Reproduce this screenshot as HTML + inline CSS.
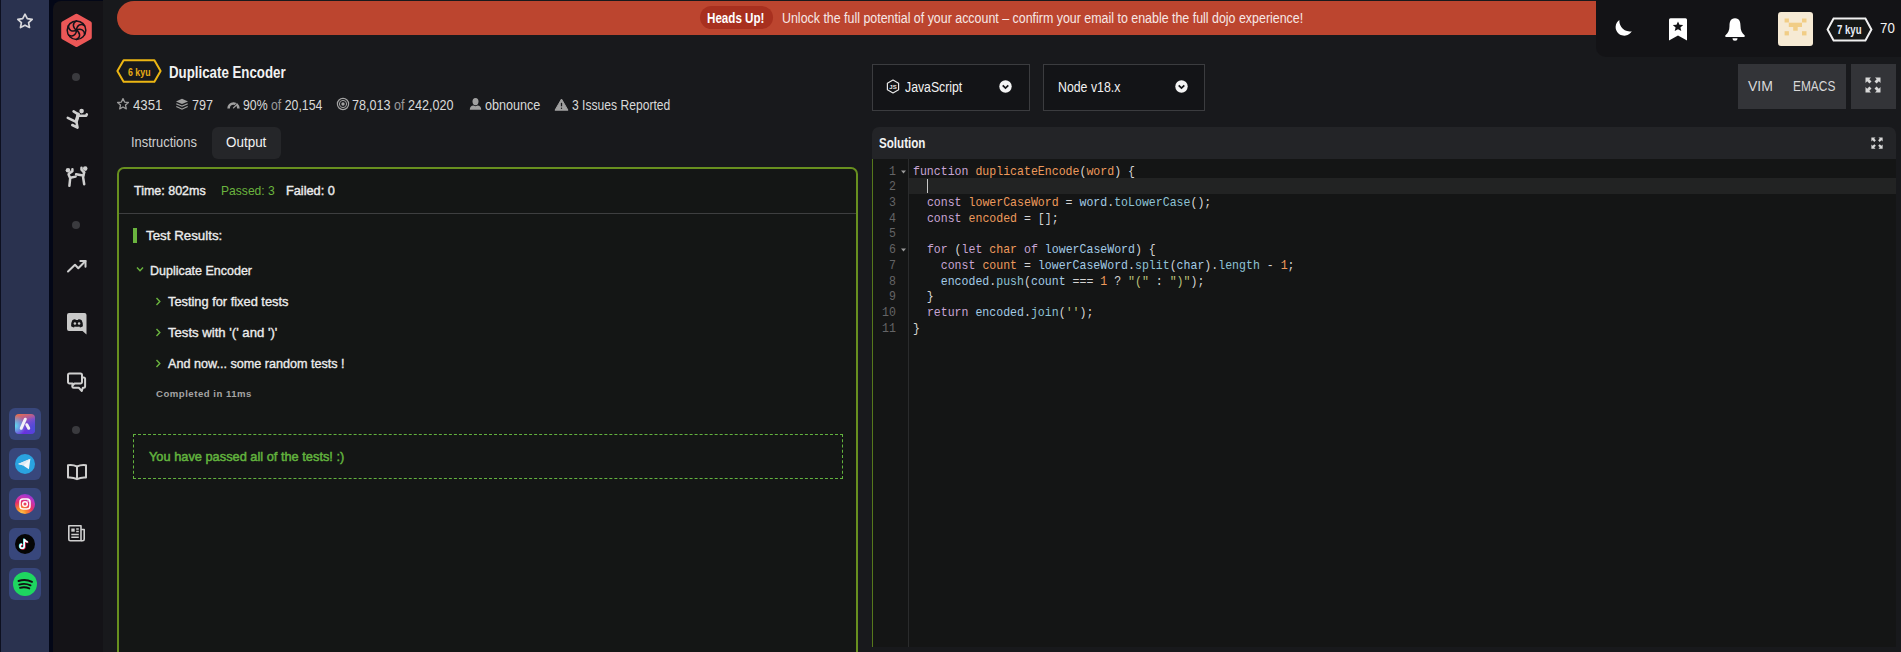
<!DOCTYPE html>
<html><head><meta charset="utf-8">
<style>
*{margin:0;padding:0;box-sizing:border-box}
html,body{width:1901px;height:652px;overflow:hidden;background:#18191c;font-family:"Liberation Sans",sans-serif;color:#e8e8e8}
.a{position:absolute}
.t{position:absolute;white-space:nowrap;transform-origin:0 0;line-height:1}
#strip{left:0;top:0;width:49px;height:652px;background:#2a324f;border-left:1px solid #0d1020}
#gap{left:49px;top:0;width:54px;height:652px;background:#030717}
#nav{left:53px;top:1px;width:50px;height:651px;background:#141317;border-top-left-radius:8px}
#banner{left:117px;top:1px;width:1500px;height:34px;background:#bc452f;border-radius:17px}
#tr{left:1596px;top:0;width:305px;height:57px;background:#131316;border-bottom-left-radius:10px}
.dot{position:absolute;left:72px;width:8px;height:8px;border-radius:50%;background:#3a3a3e}
.appbox{position:absolute;left:9px;width:32px;height:32px;border-radius:6px;background:#38477c}
.dd{position:absolute;top:64px;height:47px;border:1px solid #3b3c3f;background:#131417}
.code{position:absolute;left:913px;font-family:"Liberation Mono",monospace;font-size:13px;white-space:pre;line-height:15.73px;color:#d4d4d4;transform:scaleX(0.889);transform-origin:0 0}
.ln{position:absolute;font-family:"Liberation Mono",monospace;font-size:13px;line-height:15.73px;color:#646466;text-align:right;width:24px;left:872px;transform:scaleX(0.889);transform-origin:100% 0}
.k{color:#c7a4d4}.d{color:#ee9a5c}.v{color:#a3cbe6}.p{color:#8ec3d6}.n{color:#ee9a5c}.s{color:#bcc27a}
</style></head><body>
<div class="a" id="strip"></div>
<div class="a" id="gap"></div>
<div class="a" id="nav"></div>
<div class="a" id="banner"></div>
<div class="a" id="tr"></div>

<!-- ===== left strip ===== -->
<svg class="a" style="left:15px;top:12px" width="20" height="18" viewBox="0 0 20 18"><path d="M10 2.2 L12.3 6.6 L17.2 7.3 L13.6 10.7 L14.5 15.5 L10 13.2 L5.5 15.5 L6.4 10.7 L2.8 7.3 L7.7 6.6 Z" fill="none" stroke="#d8d8dc" stroke-width="1.7" stroke-linejoin="round"/></svg>

<div class="appbox" style="top:408px"></div>
<div class="appbox" style="top:448px"></div>
<div class="appbox" style="top:488px"></div>
<div class="appbox" style="top:528px"></div>
<div class="appbox" style="top:568px"></div>

<!-- ===== nav ===== -->
<svg class="a" style="left:60px;top:13px" width="33" height="35" viewBox="0 0 33 35"><path d="M16.5 2.8 L29.8 10.3 L29.8 24.6 L16.5 32.1 L3.2 24.6 L3.2 10.3 Z" fill="#ec5757" stroke="#ec5757" stroke-width="4" stroke-linejoin="round"/><g transform="translate(16.5 17.2)" fill="none" stroke="#15131a" stroke-width="1.5" stroke-linecap="round"><circle r="9.3"/><path d="M0.5 0.5 C -4 -2.5, -4.5 -7, 0 -9.3" transform="rotate(0)"/><path d="M0.5 0.5 C -4 -2.5, -4.5 -7, 0 -9.3" transform="rotate(60)"/><path d="M0.5 0.5 C -4 -2.5, -4.5 -7, 0 -9.3" transform="rotate(120)"/><path d="M0.5 0.5 C -4 -2.5, -4.5 -7, 0 -9.3" transform="rotate(180)"/><path d="M0.5 0.5 C -4 -2.5, -4.5 -7, 0 -9.3" transform="rotate(240)"/><path d="M0.5 0.5 C -4 -2.5, -4.5 -7, 0 -9.3" transform="rotate(300)"/></g></svg>
<div class="dot" style="top:73px"></div>
<div class="dot" style="top:221px"></div>
<div class="dot" style="top:426px"></div>

<!-- ===== banner ===== -->
<div class="a" style="left:700px;top:6px;width:73px;height:23px;border-radius:12px;background:#a8301f"></div>
<div class="t" style="left:707px;top:11px;font-size:14px;font-weight:bold;color:#fff;transform:scaleX(0.83)">Heads Up!</div>
<div class="t" style="left:782px;top:10.5px;font-size:14px;color:#f7e8e6;transform:scaleX(0.887)">Unlock the full potential of your account – confirm your email to enable the full dojo experience!</div>

<!-- ===== title ===== -->
<svg class="a" style="left:116px;top:59px" width="47" height="25" viewBox="0 0 47 25"><path d="M1.4 12 L7.6 1.3 L38.4 1.3 L44.6 12 L38.4 22.7 L7.6 22.7 Z" fill="none" stroke="#ecb613" stroke-width="2" stroke-linejoin="round"/></svg>
<div class="t" style="left:128px;top:66.5px;font-size:11px;font-weight:bold;color:#e9ad14;transform:scaleX(0.8)">6 kyu</div>
<div class="t" style="left:169px;top:65px;font-size:16px;font-weight:bold;color:#f2f2f2;transform:scaleX(0.83)">Duplicate Encoder</div>

<!-- ===== stats ===== -->
<div class="t" style="left:133px;top:98px;font-size:14px;color:#d9d9d9;transform:scaleX(0.94)">4351</div>
<div class="t" style="left:192px;top:98px;font-size:14px;color:#d9d9d9;transform:scaleX(0.9)">797</div>
<div class="t" style="left:243px;top:98px;font-size:14px;color:#d9d9d9;transform:scaleX(0.878)">90% <span style="color:#9a9a9a">of</span> 20,154</div>
<div class="t" style="left:352px;top:98px;font-size:14px;color:#d9d9d9;transform:scaleX(0.9)">78,013 <span style="color:#9a9a9a">of</span> 242,020</div>
<div class="t" style="left:485px;top:98px;font-size:14px;color:#d9d9d9;transform:scaleX(0.9)">obnounce</div>
<div class="t" style="left:572px;top:98px;font-size:14px;color:#d9d9d9;transform:scaleX(0.865)">3 Issues Reported</div>

<!-- ===== tabs ===== -->
<div class="a" style="left:212px;top:127px;width:69px;height:32px;border-radius:6px;background:#252629"></div>
<div class="t" style="left:131px;top:135px;font-size:14px;color:#cfcfcf;transform:scaleX(0.92)">Instructions</div>
<div class="t" style="left:226px;top:135px;font-size:14px;color:#f2f2f2;transform:scaleX(0.96)">Output</div>

<!-- ===== output panel ===== -->
<div class="a" style="left:117px;top:167px;width:741px;height:520px;border:2px solid #68901f;border-radius:7px;background:#141615"></div>
<div class="a" style="left:119px;top:213px;width:737px;height:1px;background:#3e3f40"></div>
<div class="t" style="left:134px;top:184px;font-size:13px;color:#ececec;-webkit-text-stroke:0.4px #ececec;transform:scaleX(0.96)">Time: 802ms</div>
<div class="t" style="left:221px;top:184px;font-size:13px;color:#6ab43e;transform:scaleX(0.93)">Passed: 3</div>
<div class="t" style="left:286px;top:184px;font-size:13px;color:#ececec;-webkit-text-stroke:0.4px #ececec;transform:scaleX(0.98)">Failed: 0</div>
<div class="a" style="left:133px;top:228px;width:4px;height:15px;background:#6ab43e"></div>
<div class="t" style="left:146px;top:229px;font-size:13px;color:#ececec;-webkit-text-stroke:0.35px #ececec;transform:scaleX(1.025)">Test Results:</div>
<div class="t" style="left:150px;top:263.5px;font-size:13px;color:#ececec;-webkit-text-stroke:0.35px #ececec;transform:scaleX(0.96)">Duplicate Encoder</div>
<div class="t" style="left:167.5px;top:295px;font-size:13px;color:#ececec;-webkit-text-stroke:0.35px #ececec;transform:scaleX(0.986)">Testing for fixed tests</div>
<div class="t" style="left:167.5px;top:326px;font-size:13px;color:#ececec;-webkit-text-stroke:0.35px #ececec;transform:scaleX(1.01)">Tests with '(' and ')'</div>
<div class="t" style="left:167.5px;top:357px;font-size:13px;color:#ececec;-webkit-text-stroke:0.35px #ececec;transform:scaleX(0.97)">And now... some random tests !</div>
<div class="t" style="left:156px;top:389px;font-size:9.6px;font-weight:bold;color:#a4a4a4;letter-spacing:0.5px">Completed in 11ms</div>
<div class="a" style="left:133px;top:434px;width:710px;height:45px;border:1px dashed #62b33e"></div>
<div class="t" style="left:149px;top:450px;font-size:13px;color:#62b33e;-webkit-text-stroke:0.5px #62b33e;transform:scaleX(0.985)">You have passed all of the tests! :)</div>

<!-- ===== editor toolbar ===== -->
<div class="dd" style="left:872px;width:158px"></div>
<div class="dd" style="left:1043px;width:162px"></div>
<div class="t" style="left:905px;top:80px;font-size:14px;color:#f2f2f2;transform:scaleX(0.876)">JavaScript</div>
<div class="t" style="left:1058px;top:80px;font-size:14px;color:#f2f2f2;transform:scaleX(0.88)">Node v18.x</div>
<div class="a" style="left:1738px;top:64px;width:108px;height:45px;background:#333438"></div>
<div class="a" style="left:1851px;top:64px;width:45px;height:45px;background:#333438"></div>
<div class="t" style="left:1748px;top:79px;font-size:14px;color:#d8d8d8">VIM</div>
<div class="t" style="left:1793px;top:79px;font-size:14px;color:#d8d8d8;transform:scaleX(0.85)">EMACS</div>

<!-- ===== editor ===== -->
<div class="a" style="left:872px;top:127px;width:1024px;height:32px;background:#232427;border-radius:7px 7px 0 0"></div>
<div class="t" style="left:879px;top:136px;font-size:14px;font-weight:bold;color:#f2f2f2;transform:scaleX(0.83)">Solution</div>
<div class="a" style="left:872px;top:159px;width:1024px;height:488px;background:#141515;border-left:1px solid #56781c"></div>
<div class="a" style="left:908px;top:159px;width:1px;height:488px;background:#2a2b2c"></div>
<div class="a" style="left:909px;top:178px;width:987px;height:16px;background:#222323"></div>


<!-- code -->
<div class="ln" style="top:163.5px">1<br>2<br>3<br>4<br>5<br>6<br>7<br>8<br>9<br>10<br>11</div>
<div class="code" style="top:163.5px"><span class="k">function</span> <span class="d">duplicateEncode</span>(<span class="d">word</span>) {

  <span class="k">const</span> <span class="d">lowerCaseWord</span> = <span class="v">word</span>.<span class="p">toLowerCase</span>();
  <span class="k">const</span> <span class="d">encoded</span> = [];

  <span class="k">for</span> (<span class="k">let</span> <span class="d">char</span> <span class="k">of</span> <span class="v">lowerCaseWord</span>) {
    <span class="k">const</span> <span class="d">count</span> = <span class="v">lowerCaseWord</span>.<span class="p">split</span>(<span class="v">char</span>).<span class="p">length</span> - <span class="n">1</span>;
    <span class="v">encoded</span>.<span class="p">push</span>(<span class="v">count</span> === <span class="n">1</span> ? <span class="s">"("</span> : <span class="s">")"</span>);
  }
  <span class="k">return</span> <span class="v">encoded</span>.<span class="p">join</span>(<span class="s">''</span>);
}</div>
<div class="a" style="left:927px;top:179px;width:1px;height:14px;background:#c8c8c8"></div>
<svg class="a" style="left:900px;top:168.5px" width="7" height="6" viewBox="0 0 7 6"><path d="M1 1.5 L6 1.5 L3.5 4.5 Z" fill="#9a9a9a"/></svg>
<svg class="a" style="left:900px;top:246.5px" width="7" height="6" viewBox="0 0 7 6"><path d="M1 1.5 L6 1.5 L3.5 4.5 Z" fill="#9a9a9a"/></svg>

<!-- nav icons -->
<svg class="a" style="left:64px;top:106px" width="26" height="26" viewBox="0 0 26 26" fill="none" stroke="#cfcfcf" stroke-width="2.6" stroke-linecap="round" stroke-linejoin="round">
<circle cx="17.6" cy="5.1" r="2.3" fill="#cfcfcf" stroke="none"/>
<path d="M3.8 11.8 L11 15.3"/><path d="M9.6 5.4 L14.3 8.3 L12.3 15.3 L13.5 21.6 L8.3 19"/><path d="M14.6 9.8 L22.2 9.6 L22.8 8.4"/><path d="M14.3 8.3 L12.3 15.3" stroke-width="3.4"/>
</svg>
<svg class="a" style="left:64px;top:165px" width="26" height="26" viewBox="0 0 26 26" fill="none" stroke="#cfcfcf" stroke-width="2.5" stroke-linecap="round" stroke-linejoin="round">
<circle cx="4" cy="5.2" r="2.3" fill="#cfcfcf" stroke="none"/><circle cx="21.2" cy="3.6" r="2.3" fill="#cfcfcf" stroke="none"/>
<path d="M4.6 9.5 L6.2 13.2 L5.4 20.8"/><path d="M6.2 12.8 L11.6 11.6"/><path d="M5 8.6 L8.4 6.3 L8.4 4.2"/>
<path d="M20.2 7.3 L19.1 12.2 L20.2 19.2"/><path d="M19.1 10.6 L12.1 9.2"/><path d="M20 7.5 L17.5 4.7 L17.5 2.8"/>
</svg>
<svg class="a" style="left:66px;top:259px" width="22" height="14" viewBox="0 0 22 14" fill="none" stroke="#cfcfcf" stroke-width="2" stroke-linecap="round" stroke-linejoin="round">
<path d="M2 12.5 L9 5.8 L12.3 9.2 L19.5 2"/><path d="M14.3 2 L19.5 2 L19.5 7.8"/>
</svg>
<svg class="a" style="left:66px;top:312px" width="22" height="23" viewBox="0 0 22 23">
<path d="M3 1 H18.5 A2 2 0 0 1 20.5 3 V22.5 L16.5 19 H3 A2 2 0 0 1 1 17 V3 A2 2 0 0 1 3 1 Z" fill="#c9c9c9"/>
<path d="M6.3 8.2 Q8 7 9.4 7.3 L9.8 8 Q10.8 7.8 12 8 L12.4 7.3 Q14 7 15.7 8.2 Q17.2 11 16.9 14.2 Q15.6 15.3 14 15.5 L13.3 14.5 Q11 15.2 8.7 14.5 L8 15.5 Q6.4 15.3 5.1 14.2 Q4.8 11 6.3 8.2 Z" fill="#141417"/>
<circle cx="8.9" cy="11.6" r="1.25" fill="#c9c9c9"/><circle cx="13.1" cy="11.6" r="1.25" fill="#c9c9c9"/>
</svg>
<svg class="a" style="left:66px;top:371px" width="22" height="22" viewBox="0 0 22 22" fill="none" stroke="#cfcfcf" stroke-width="2" stroke-linejoin="round">
<path d="M3.5 2.5 H14.5 A1.5 1.5 0 0 1 16 4 V11 A1.5 1.5 0 0 1 14.5 12.5 H8.5 L6.5 14.5 V12.5 H3.5 A1.5 1.5 0 0 1 2 11 V4 A1.5 1.5 0 0 1 3.5 2.5 Z"/>
<path d="M16 6.5 H17.8 A1.3 1.3 0 0 1 19.1 7.8 V15.5 A1.3 1.3 0 0 1 17.8 16.8 H16.8 L15.8 20 L12.8 16.8 H7.6 A1.3 1.3 0 0 1 6.3 15.5 V14.5"/>
</svg>
<svg class="a" style="left:66px;top:463px" width="22" height="18" viewBox="0 0 22 18" fill="none" stroke="#cfcfcf" stroke-width="2" stroke-linejoin="round">
<path d="M11 3.5 Q7 1.5 2 2.2 V14.5 Q7 14 11 16.2 Q15 14 20 14.5 V2.2 Q15 1.5 11 3.5 Z"/><path d="M11 3.5 V16"/>
</svg>
<svg class="a" style="left:67px;top:524px" width="20" height="19" viewBox="0 0 20 19" fill="none" stroke="#cfcfcf" stroke-width="1.6" stroke-linejoin="round">
<path d="M1.8 1.8 H14 V16.7 H3.3 A1.5 1.5 0 0 1 1.8 15.2 Z"/><path d="M14 5.5 H17.2 V15.2 A1.5 1.5 0 0 1 15.7 16.7 H14"/>
<rect x="4.3" y="4.5" width="3.4" height="3.2" fill="#cfcfcf" stroke="none"/><path d="M9.2 5 H11.8 M9.2 7.5 H11.8 M4.3 10.5 H11.8 M4.3 13.3 H11.8" stroke-width="1.4"/>
</svg>

<!-- app icons -->
<svg class="a" style="left:15px;top:414px" width="20" height="20" viewBox="0 0 20 20">
<defs><linearGradient id="g1" x1="0" y1="0" x2="0.3" y2="1"><stop offset="0" stop-color="#f2733e"/><stop offset="0.5" stop-color="#8a4fc8"/><stop offset="1" stop-color="#6a2fe0"/></linearGradient>
<radialGradient id="g1b" cx="0" cy="0.6" r="0.55"><stop offset="0" stop-color="#5fe0f0"/><stop offset="1" stop-color="#5fd8f0" stop-opacity="0"/></radialGradient>
<radialGradient id="g1c" cx="1" cy="0.7" r="0.6"><stop offset="0" stop-color="#4a50d8"/><stop offset="1" stop-color="#4a50d8" stop-opacity="0"/></radialGradient></defs>
<rect width="20" height="20" rx="4" fill="url(#g1)"/><rect width="20" height="20" rx="4" fill="url(#g1b)"/><rect width="20" height="20" rx="4" fill="url(#g1c)"/>
<path d="M10.3 5.2 L6.2 14.3 M11.8 10.7 L13.7 14.3" stroke="#f4f0f8" stroke-width="3" stroke-linecap="round" fill="none"/>
</svg>
<svg class="a" style="left:15px;top:454px" width="20" height="20" viewBox="0 0 20 20">
<circle cx="10" cy="10" r="10" fill="#2aa3e0"/><path d="M3 9.9 L15.4 4.7 L13.9 15.2 L9.6 12.4 L8.6 11.6 Z" fill="#f2f6fa"/><path d="M3 9.9 L8.6 11.6 L15.4 4.7" fill="#dfe9f3"/>
</svg>
<svg class="a" style="left:15px;top:494px" width="20" height="20" viewBox="0 0 20 20">
<defs><radialGradient id="g3" cx="0.3" cy="1" r="1.1"><stop offset="0" stop-color="#fdd65c"/><stop offset="0.25" stop-color="#fb8a2a"/><stop offset="0.55" stop-color="#e6306a"/><stop offset="0.8" stop-color="#bd35c0"/><stop offset="1" stop-color="#7a3ad8"/></radialGradient></defs>
<rect width="20" height="20" rx="10" fill="url(#g3)"/><rect x="5" y="5" width="10" height="10" rx="3" fill="none" stroke="#fff" stroke-width="1.5"/><circle cx="10" cy="10" r="2.3" fill="none" stroke="#fff" stroke-width="1.5"/><circle cx="13" cy="7" r="0.7" fill="#fff"/>
</svg>
<svg class="a" style="left:15px;top:534px" width="20" height="20" viewBox="0 0 20 20">
<circle cx="10" cy="10" r="10" fill="#050505"/>
<path d="M9.3 5 V12.3 A2.1 2.1 0 1 1 7.2 10.2 M9.3 5 Q10 7.6 12.8 8" fill="none" stroke="#ee2a55" stroke-width="1.6" transform="translate(0.6 0.5)"/>
<path d="M9.3 5 V12.3 A2.1 2.1 0 1 1 7.2 10.2 M9.3 5 Q10 7.6 12.8 8" fill="none" stroke="#46e0e6" stroke-width="1.6" transform="translate(-0.5 -0.4)"/>
<path d="M9.3 5 V12.3 A2.1 2.1 0 1 1 7.2 10.2 M9.3 5 Q10 7.6 12.8 8" fill="none" stroke="#fff" stroke-width="1.4"/>
</svg>
<svg class="a" style="left:13px;top:572px" width="24" height="24" viewBox="0 0 24 24">
<circle cx="12" cy="12" r="12" fill="#1ed760"/><path d="M5.5 9 Q12.5 6.6 19 9.8 M6.3 12.6 Q12 10.8 17.5 13.3 M7 15.8 Q11.8 14.4 16.3 16.4" fill="none" stroke="#111" stroke-width="1.9" stroke-linecap="round"/>
</svg>

<!-- stats icons -->
<svg class="a" style="left:116px;top:97px" width="14" height="14" viewBox="0 0 14 14"><path d="M7 1.6 L8.6 5.1 L12.4 5.5 L9.5 8.1 L10.3 11.9 L7 10 L3.7 11.9 L4.5 8.1 L1.6 5.5 L5.4 5.1 Z" fill="none" stroke="#9c9c9c" stroke-width="1.3" stroke-linejoin="round"/></svg>
<svg class="a" style="left:175px;top:98px" width="14" height="13" viewBox="0 0 14 13" fill="#a0a0a0"><path d="M7 0.8 L13 3.4 L7 6 L1 3.4 Z"/><path d="M1.6 5.3 L7 7.6 L12.4 5.3 L13 6.2 L7 8.8 L1 6.2 Z"/><path d="M1.6 8.1 L7 10.4 L12.4 8.1 L13 9 L7 11.8 L1 9 Z"/></svg>
<svg class="a" style="left:227px;top:101px" width="13" height="8" viewBox="0 0 13 8"><path d="M1.6 7.4 A4.9 4.9 0 0 1 11.4 7.4" fill="none" stroke="#a0a0a0" stroke-width="2.6"/><path d="M6.3 6.8 L9.6 2.6" stroke="#18191c" stroke-width="1.2"/><path d="M6.5 6.9 L10.2 3.2" stroke="#a0a0a0" stroke-width="1.3" stroke-linecap="round"/></svg>
<svg class="a" style="left:336px;top:97px" width="14" height="14" viewBox="0 0 14 14" fill="none" stroke="#a4a4a4"><circle cx="7" cy="7" r="5.6" stroke-width="1.2"/><circle cx="7" cy="7" r="3.6" stroke-width="1"/><circle cx="7" cy="7" r="1.7" fill="#a4a4a4" stroke="none"/></svg>
<svg class="a" style="left:469px;top:97px" width="13" height="14" viewBox="0 0 13 14" fill="#a0a0a0"><ellipse cx="6.5" cy="4.6" rx="3" ry="3.6"/><path d="M0.8 12.8 Q0.8 8.8 4.5 8.6 L6.5 9.3 L8.5 8.6 Q12.2 8.8 12.2 12.8 Z"/></svg>
<svg class="a" style="left:554px;top:98px" width="15" height="13" viewBox="0 0 15 13"><path d="M7.5 1 L14 12.2 L1 12.2 Z" fill="#a0a0a0" stroke="#a0a0a0" stroke-width="1" stroke-linejoin="round"/><path d="M7.5 4.8 V8.3" stroke="#18191c" stroke-width="1.3"/><circle cx="7.5" cy="10.2" r="0.7" fill="#18191c"/></svg>

<!-- top right -->
<svg class="a" style="left:1612px;top:18px" width="22" height="22" viewBox="0 0 22 22"><path d="M7.4 2 A8.6 8.6 0 1 0 19.8 13.2 A10.5 10.5 0 0 1 7.4 2 Z" fill="#fff"/></svg>
<svg class="a" style="left:1668px;top:17px" width="20" height="25" viewBox="0 0 20 25"><path d="M2.5 1.2 H17.5 A1.5 1.5 0 0 1 19 2.7 V23.5 L10 18.5 L1 23.5 V2.7 A1.5 1.5 0 0 1 2.5 1.2 Z" fill="#fff"/><path d="M10 4.4 L11.5 7.8 L15.2 8.1 L12.4 10.5 L13.3 14.1 L10 12.2 L6.7 14.1 L7.6 10.5 L4.8 8.1 L8.5 7.8 Z" fill="#131316"/></svg>
<svg class="a" style="left:1723px;top:17px" width="24" height="25" viewBox="0 0 24 25"><path d="M12 1.2 C7.2 1.2 6.5 5.5 6.5 9 C6.5 13.5 5 16 2.5 18.2 C1.8 18.9 2.2 20 3.2 20 H20.8 C21.8 20 22.2 18.9 21.5 18.2 C19 16 17.5 13.5 17.5 9 C17.5 5.5 16.8 1.2 12 1.2 Z" fill="#fff"/><path d="M9.5 21.2 A2.5 2.5 0 0 0 14.5 21.2 Z" fill="#fff"/></svg>
<div class="a" style="left:1778px;top:12px;width:35px;height:34px;border-radius:3px;background:#f6ead4"></div>
<svg class="a" style="left:1778px;top:12px" width="35" height="34" viewBox="0 0 35 34" fill="#f1cd86">
<rect x="6.6" y="6.5" width="4.3" height="4"/><rect x="24" y="6.5" width="4.5" height="4"/>
<rect x="10.8" y="10.7" width="13.2" height="4.3"/><rect x="15.2" y="15" width="4.5" height="3.7"/>
<rect x="6.6" y="19.2" width="4.3" height="4.2"/><rect x="24" y="19.2" width="4.5" height="4.2"/>
</svg>
<svg class="a" style="left:1826px;top:17px" width="47" height="25" viewBox="0 0 47 25"><path d="M1.6 12.5 L7.6 1.5 L39.4 1.5 L45.4 12.5 L39.4 23.5 L7.6 23.5 Z" fill="#151716" stroke="#f0f0f0" stroke-width="2"/></svg>
<div class="t" style="left:1837px;top:23.5px;font-size:12px;font-weight:bold;color:#e8eef6;transform:scaleX(0.8)">7 kyu</div>
<div class="t" style="left:1880px;top:21px;font-size:14px;color:#f4f4f4;transform:scaleX(0.95)">70</div>

<!-- dropdown icons -->
<svg class="a" style="left:886px;top:79px" width="14" height="15" viewBox="0 0 14 15"><path d="M7 1 L12.6 4.2 L12.6 10.8 L7 14 L1.4 10.8 L1.4 4.2 Z" fill="none" stroke="#e8e8e8" stroke-width="1.2" stroke-linejoin="round"/><text x="7" y="10" font-family="Liberation Sans" font-size="6" font-weight="bold" fill="#e8e8e8" text-anchor="middle">JS</text></svg>
<svg class="a" style="left:999px;top:80px" width="13" height="13" viewBox="0 0 13 13"><circle cx="6.5" cy="6.5" r="6.2" fill="#f4f4f4"/><path d="M3.7 5.3 L6.5 8.1 L9.3 5.3" fill="none" stroke="#131417" stroke-width="1.7"/></svg>
<svg class="a" style="left:1175px;top:80px" width="13" height="13" viewBox="0 0 13 13"><circle cx="6.5" cy="6.5" r="6.2" fill="#f4f4f4"/><path d="M3.7 5.3 L6.5 8.1 L9.3 5.3" fill="none" stroke="#131417" stroke-width="1.7"/></svg>

<!-- expand icons -->
<svg class="a" style="left:1865px;top:77px" width="16" height="16" viewBox="0 0 16 16" fill="#d8d8d8">
<path d="M0.5 0.5 H6 L4.3 2.2 L6.5 4.4 L4.4 6.5 L2.2 4.3 L0.5 6 Z"/><path d="M15.5 0.5 V6 L13.8 4.3 L11.6 6.5 L9.5 4.4 L11.7 2.2 L10 0.5 Z"/>
<path d="M0.5 15.5 V10 L2.2 11.7 L4.4 9.5 L6.5 11.6 L4.3 13.8 L6 15.5 Z"/><path d="M15.5 15.5 H10 L11.7 13.8 L9.5 11.6 L11.6 9.5 L13.8 11.7 L15.5 10 Z"/>
</svg>
<svg class="a" style="left:1871px;top:137px" width="12" height="12" viewBox="0 0 16 16" fill="#d8d8d8">
<path d="M0.5 0.5 H6 L4.3 2.2 L6.5 4.4 L4.4 6.5 L2.2 4.3 L0.5 6 Z"/><path d="M15.5 0.5 V6 L13.8 4.3 L11.6 6.5 L9.5 4.4 L11.7 2.2 L10 0.5 Z"/>
<path d="M0.5 15.5 V10 L2.2 11.7 L4.4 9.5 L6.5 11.6 L4.3 13.8 L6 15.5 Z"/><path d="M15.5 15.5 H10 L11.7 13.8 L9.5 11.6 L11.6 9.5 L13.8 11.7 L15.5 10 Z"/>
</svg>

<!-- output chevrons -->
<svg class="a" style="left:136px;top:266px" width="8" height="7" viewBox="0 0 8 7"><path d="M1 1.5 L4 4.8 L7 1.5" fill="none" stroke="#6ab43e" stroke-width="1.4"/></svg>
<svg class="a" style="left:155px;top:297px" width="7" height="9" viewBox="0 0 7 9"><path d="M1.5 1 L4.8 4.5 L1.5 8" fill="none" stroke="#6ab43e" stroke-width="1.4"/></svg>
<svg class="a" style="left:155px;top:328px" width="7" height="9" viewBox="0 0 7 9"><path d="M1.5 1 L4.8 4.5 L1.5 8" fill="none" stroke="#6ab43e" stroke-width="1.4"/></svg>
<svg class="a" style="left:155px;top:359px" width="7" height="9" viewBox="0 0 7 9"><path d="M1.5 1 L4.8 4.5 L1.5 8" fill="none" stroke="#6ab43e" stroke-width="1.4"/></svg>
</body></html>
